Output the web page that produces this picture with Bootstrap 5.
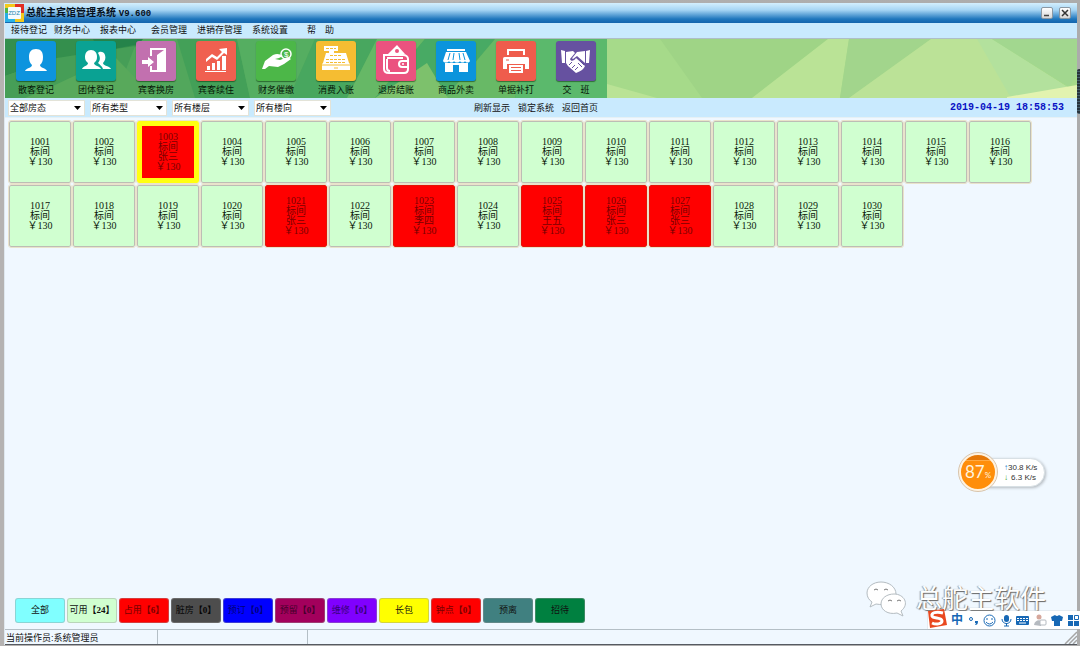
<!DOCTYPE html>
<html lang="zh-CN">
<head>
<meta charset="utf-8">
<meta name="viewport" content="width=device-width, initial-scale=1">
<title>总舵主宾馆管理系统 V9.600</title>
<link href="https://cdn.jsdelivr.net/npm/bootstrap@5.3.0/dist/css/bootstrap.min.css" rel="stylesheet">
<style>
  body { font-family: "Liberation Sans", "Noto Sans CJK SC", sans-serif; font-size: 9px; line-height: 12px; color: #111; background: #b0b0b0; }
  a { color: inherit; text-decoration: none; }
  button { font: inherit; color: inherit; }
  .frame { padding: 3px 3px 1px 4px; background: linear-gradient(90deg, #b5b3b2, #acacac); }
  .window { background: #f0f8ff; border-left: 1px solid #dfe8ee; }
  .titlebar { height: 20px; background: linear-gradient(#d3effe 0, #a6d5f4 35%, #1f76bd 80%, #1465ad); }
  .titlebar h1 { font-size: 10px; line-height: 20px; font-weight: 700; color: #06101c; padding-left: 2px; }
  .titlebar h1 span { font-family: "Liberation Mono", monospace; font-size: 9px; }
  .winbtn { width: 12px; height: 12px; padding: 0; border: 1px solid #8b98a3; border-radius: 2px; background: linear-gradient(#fff, #d6d6d6); }
  .winbtn svg { display: block; }
  .winbtn-min { margin-right: 6px; }
  .menubar { height: 16px; background: #c9eafe; border-bottom: 1px solid #aebfc6; padding-left: 6px; line-height: 15px; gap: 10px; }
  .menubar .menu-tight { margin-right: -3px; }
  .menubar .menu-loose { margin-right: 5px; }
  .menubar .menu-last { margin-left: 9px; }
  .toolbar-strip { height: 59px; background: #a4d88b; }
  .toolbar-art { width: 602px; height: 59px; }
  .tools { padding-left: 1px; }
  .tool { width: 60px; padding: 2px 0 0; border: 0; background: none; line-height: 18px; color: #061606; }
  .tile { width: 40px; height: 40px; border-radius: 3px; box-shadow: 0 1px 1px rgba(0,40,0,.5); }
  .tile svg { display: block; fill: #fff; }
  .filterbar { height: 20px; background: #c9eafe; border-bottom: 1px solid #e6f1f5; padding: 0 13px 0 3px; }
  .filters { gap: 5px; }
  .filterbar .form-select { width: 77px; height: 16px; min-height: 0; padding: 1px 12px 0 1px; font-size: 9px; line-height: 13px; color: #111; border: 1px solid #e3e3d8; border-radius: 0; background-color: #fff; background-position: right 3px center; background-size: 7px 4px;
    background-image: url("data:image/svg+xml,%3csvg xmlns='http://www.w3.org/2000/svg' viewBox='0 0 7 4'%3e%3cpath d='M0 0h7L3.5 4z'/%3e%3c/svg%3e"); }
  .quick { margin-left: 143px; gap: 8px; }
  .clock { font: 700 10px/18px "Liberation Mono", monospace; color: #0a12c4; }
  .rooms { gap: 2px; padding: 3px 4px; }
  .room { width: 62px; height: 62px; padding: 0; border: 1px solid #bdbdb5; border-radius: 2px; outline: 1px solid #e9e3cb; background: #d0ffd0; font-family: "Liberation Serif", "Noto Sans CJK SC", serif; font-size: 10px; line-height: 10px; color: #0b1a0b; }
  .room.busy { background: #f00; border-color: #e31408; color: #780000; }
  .room.picked { border: 4px solid #ff1; box-shadow: inset 0 0 0 1px #ff1; background-clip: padding-box; }
  .legend-row { gap: 2px; padding: 0 10px 6px; }
  .state { width: 50px; height: 25px; padding: 0; border: 1px solid rgba(150,150,150,.4); border-radius: 3px; white-space: nowrap; line-height: 23px; overflow: hidden; }
  .state b { font-family: "Liberation Serif", "Noto Sans CJK SC", serif; }
  .statusbar { height: 16px; border-top: 1px solid #b4bfc6; border-bottom: 1px solid #565a61; line-height: 16px; }
  .statusbar > div { border-right: 1px solid #b4bfc6; padding-left: 1px; }
  .pane-a { width: 153px; } .pane-b { width: 150px; }
  .speed { right: 35px; bottom: 155px; }
  .gauge { width: 38px; height: 38px; border-radius: 50%; border: 2px solid #fff2df; outline: 1px solid #d9c4aa; background: linear-gradient(#e57808 0 5px, #ffab45 5px 6px, #ff8e0a 6px); color: #fff3dc; font: 17px/34px Lato, sans-serif; z-index: 1; }
  .gauge small { font-size: 8px; }
  .rates { margin-left: -12px; width: 60px; height: 29px; padding: 4px 8px 0 18px; border: 1px solid #d8e0e5; border-radius: 0 15px 15px 0; background: #fff; box-shadow: 1px 1px 3px rgba(0,0,0,.25); font-size: 8px; line-height: 10px; color: #333; white-space: nowrap; }
  .brand { right: 34px; bottom: 29px; gap: 8px; font-size: 26px; line-height: 36px; color: #fdfefe; text-shadow: 1px 1px 1px #666, -1px 0 1px #999fa3; }
  .ime { right: 0; bottom: 17px; height: 18px; width: 152px; background: #fff; box-shadow: 0 0 1px #aaa; padding: 0 1px 0 23px; }
  .ime button { border: 0; background: none; padding: 0; color: #1768b5; font-size: 12px; line-height: 16px; font-weight: 700; }
  .ime svg, .brand svg { display: block; }
  .sogou { left: -2px; top: -3px; }
  .edge { right: 0; top: 69px; width: 3px; height: 45px; border-radius: 2px 0 0 2px; background: repeating-linear-gradient(#28333b 0 2px, #46606d 2px 3px); }
</style>
</head>
<body>
<div class="frame min-vh-100 d-flex flex-column position-relative">
<div class="window flex-grow-1 d-flex flex-column position-relative">

  <header class="titlebar d-flex align-items-center">
    <svg width="19" height="20" viewBox="0 0 19 20" class="flex-shrink-0"><path fill="#28aee5" d="M0 7h5v12H0z"/><path fill="#f3c91d" d="M0 1h10v4H4v4H0z"/><path fill="#e12e25" d="M10 1h9v9h-4V5h-5z"/><path fill="#4fb64b" d="M0 5h4v5H0z"/><path fill="#f3c91d" d="M15 10h4v9H9v-4h6z"/><path fill="#29b3e6" d="M3 15h7v4H3z"/><rect x="3" y="4" width="13" height="12" rx="1" fill="#f5fbff"/><text x="9" y="12" font-size="6" text-anchor="middle" fill="#2487ae" font-family="Liberation Sans">ZDZ</text></svg>
    <h1 class="m-0 flex-grow-1">总舵主宾馆管理系统 <span>V9.600</span></h1>
    <button class="winbtn winbtn-min" aria-label="最小化"><svg width="10" height="10"><path d="M2 7.500h5" stroke="#444" stroke-width="1.500"/></svg></button>
    <button class="winbtn winbtn-min" aria-label="关闭"><svg width="10" height="10"><path d="M2 2l6 6M8 2l-6 6" stroke="#333" stroke-width="1.500"/></svg></button>
  </header>

  <nav class="menubar d-flex">
    <a href="#" class="menu-tight">接待登记</a><a href="#">财务中心</a><a href="#" class="menu-loose">报表中心</a><a href="#">会员管理</a><a href="#">进销存管理</a><a href="#">系统设置</a><a href="#" class="menu-last">帮&emsp;助</a>
  </nav>

  <div class="toolbar-strip position-relative overflow-hidden">
    <div class="d-flex h-100 position-absolute w-100">
      <svg class="toolbar-art flex-shrink-0" viewBox="0 0 602 59" preserveAspectRatio="none">
        <rect width="602" height="59" fill="#52a75c"/>
        <path fill="#348f4d" d="M0 0h135l-5 8L50 20 0 37z"/><path fill="#25834a" d="M88 0h50l-4 5-40 8z"/><path fill="#469e57" d="M0 37l52-18L130 7l-20 52H0z"/><path fill="#58a95b" d="M50 46l60-28 40 41H20z"/><path fill="#43a058" d="M172 0h60l13 59h-55z"/><path fill="#55ae61" d="M232 0h78l-26 59h-39z"/><path fill="#48a75f" d="M310 0h62l-30 59h-58z"/><path fill="#66b866" d="M372 0h48l-50 59h-28z"/><path fill="#48aa64" d="M420 0h70l-50 59h-70z"/><path fill="#68b966" d="M490 0h36l-16 59h-70z"/><path fill="#5bb96c" d="M526 0h76v59h-92z"/><path fill="#7dc16c" d="M370 59l52-35 21 35z"/>
      </svg>
      <svg class="flex-grow-1 h-100" style="min-width:0" viewBox="0 0 470 59" preserveAspectRatio="none">
        <rect width="470" height="59" fill="#a6da8a"/><path fill="#9fd486" d="M53 0h168l-76 59H95z"/><path fill="#bae396" d="M0 45l50 14H0zM221 0h21l-9 59h-88z"/><path fill="#a2d58c" d="M242 0h82l-82 59h-9z"/><path fill="#bbe297" d="M324 0h60l78 49-50 8-12 2H242z"/><path fill="#b3e19d" d="M370 0h15l77 49-58 10z"/><path fill="#a2d78f" d="M385 0h85v35l-8 13z"/><path fill="#e2f3b0" d="M400 58l70-12v13h-70z"/>
      </svg>
    </div>
    <div class="tools d-flex position-relative">
      <button class="tool"><span class="tile d-block mx-auto" style="background:#0d94de"><svg viewBox="0 0 40 40"><path d="M20 8c5 0 7 3 7 8 0 4-1 6-3 8 0 3 6 3 7 6H9c1-3 7-3 7-6-2-2-3-4-3-8 0-5 2-8 7-8z"/></svg></span>散客登记</button>
      <button class="tool"><span class="tile d-block mx-auto" style="background:#0aa293"><svg viewBox="0 0 40 40"><path d="M15 9c4 0 6 3 6 7 0 3-1 4-3 6 0 3 6 3 7 6H6c1-3 6-3 6-6-2-2-3-3-3-6 0-4 2-7 6-7z"/><path d="M22 12c1-2 6-2 7 2 1 3 0 6-2 8 0 3 7 3 8 6h-8c-1-3-3-4-5-6 3-3 2-7 0-10z"/></svg></span>团体登记</button>
      <button class="tool"><span class="tile d-block mx-auto" style="background:#c270af"><svg viewBox="0 0 40 40"><path d="M14 7h16v24H14v-6h2v4h5V14l7-5H16v6h-2zM6 19h6v-3l6 5-6 5v-3H6z"/></svg></span>宾客换房</button>
      <button class="tool"><span class="tile d-block mx-auto" style="background:#f06050"><svg viewBox="0 0 40 40"><path d="M9 30h21v1H9zM11 25h3v4h-3zM16 22h3v7h-3zM21 20h3v9h-3zM26 15h4v14h-4zM10 18l6-5 5 3 5-5-3-3 8-1v7l-3-2-7 7-5-3-6 5z"/></svg></span>宾客续住</button>
      <button class="tool"><span class="tile d-block mx-auto" style="background:#4cb748"><svg viewBox="0 0 40 40"><path d="M6 28l3-8 8-6c4-2 7-1 10 1l-4 2-4 1 5 1 8-3 3 2-7 5-6 3-9-1-4 3z"/><circle cx="30" cy="13" r="5" fill="none" stroke="#fff" stroke-width="1.500"/><text x="28" y="16" font-size="8" font-family="Liberation Sans">$</text></svg></span>财务催缴</button>
      <button class="tool"><span class="tile d-block mx-auto" style="background:#f5bd32"><svg viewBox="0 0 40 40"><path d="M8 5h14v5h-4v2h12l3 10 1 1v6H6v-6l1-1 3-10h3v-2H8z"/><path stroke="#f5bd32" stroke-width="1" d="M10 7.500h10M14 14.500h12M10 18.500h20M10 21.500h20" stroke-dasharray="3 1"/><path stroke="#f5bd32" d="M6 24h28M18 27h4"/></svg></span>消费入账</button>
      <button class="tool"><span class="tile d-block mx-auto" style="background:#eb527f"><svg viewBox="0 0 40 40"><path d="M12 13l9-9 8 9z"/><circle cx="21" cy="10" r="2" fill="#eb527f"/><path fill="none" stroke="#fff" stroke-width="2" d="M9 14h18c3 0 5 2 5 4v10c0 2-1 4-4 4H13c-3 0-5-1-5-4V14zM32 20h-6c-4 0-4 6 0 6h6M11 17h16M11 18v9c0 2 1 3 3 3"/><circle cx="27" cy="23" r="1"/></svg></span>退房结账</button>
      <button class="tool"><span class="tile d-block mx-auto" style="background:#0b94dc"><svg viewBox="0 0 40 40"><path d="M11 8h18v2H11zM10 11h20l4 9c-1 2-4 2-5 0-1 2-4 2-5 0-1 2-5 2-6 0-1 2-4 2-5 0-1 2-5 2-6 0zM9 22h23v9h-9v-7h-6v7H9z"/><path stroke="#0b94dc" d="M14 12l-2 7M18 12l-1 7M23 12l1 7M27 12l2 7"/></svg></span>商品外卖</button>
      <button class="tool"><span class="tile d-block mx-auto" style="background:#ef5c4c"><svg viewBox="0 0 40 40"><path fill="none" stroke="#fff" stroke-width="2" d="M12 14V9h16v5"/><path d="M9 16h22c2 0 2 1 2 3v9h-4v-5H11v5H7v-9c0-2 0-3 2-3zM13 24h14v8H13z"/><path stroke="#ef5c4c" d="M15 26.500h10M15 29.500h10M10 19h3"/></svg></span>单据补打</button>
      <button class="tool"><span class="tile d-block mx-auto" style="background:#6651a0"><svg viewBox="0 0 40 40"><path d="M5 9l4 1v12H6zM34 9l-4 1v12h3zM10 11l7-1 2 2-5 6c1 3 4 2 6-1l9 8c-1 3-4 5-9 7l-8-7-2-3zM21 11l8-1v12l-8-7-4 3c-1 0-1-1 0-2z"/><path stroke="#6651a0" d="M13 24l3-3M16 27l3-3M19 29l3-3M24 20l4 4M22 22l4 4"/></svg></span>交&emsp;班</button>
    </div>
  </div>

  <div class="filterbar d-flex align-items-center">
    <div class="filters d-flex">
      <select class="form-select" aria-label="房态"><option>全部房态</option></select>
      <select class="form-select" aria-label="类型"><option>所有类型</option></select>
      <select class="form-select" aria-label="楼层"><option>所有楼层</option></select>
      <select class="form-select" aria-label="楼向"><option>所有楼向</option></select>
    </div>
    <div class="quick d-flex flex-grow-1"><a href="#">刷新显示</a><a href="#">锁定系统</a><a href="#">返回首页</a></div>
    <time class="clock">2019-04-19 18:58:53</time>
  </div>

  <main class="flex-grow-1"><div class="rooms d-flex flex-wrap" id="rooms"></div></main>

  <div class="legend-row d-flex flex-wrap">
    <button class="state" style="background:#80ffff">全部</button>
    <button class="state" style="background:#d0ffd0">可用<b>【24】</b></button>
    <button class="state" style="background:#f00;color:#780000">占用<b>【6】</b></button>
    <button class="state" style="background:#4d4d4d;color:#050505">脏房<b>【0】</b></button>
    <button class="state" style="background:#00f;color:#000078">预订<b>【0】</b></button>
    <button class="state" style="background:#a3005c;color:#45002b">预留<b>【0】</b></button>
    <button class="state" style="background:#8000ff;color:#370078">维修<b>【0】</b></button>
    <button class="state" style="background:#ff0">长包</button>
    <button class="state" style="background:#f00;color:#780000">钟点<b>【0】</b></button>
    <button class="state" style="background:#408080">预离</button>
    <button class="state" style="background:#008040">招待</button>
  </div>

  <footer class="statusbar d-flex"><div class="pane-a">当前操作员:系统管理员</div><div class="pane-b"></div>
    <svg class="ms-auto" width="14" height="14"><path d="M2 14L14 2M6 14l8-8M10 14l4-4" stroke="#a5a5a5" stroke-width="1.500"/></svg>
  </footer>
</div>

<div class="speed position-absolute d-flex align-items-center">
  <div class="gauge text-center position-relative">87<small>%</small></div>
  <div class="rates"><div class="d-flex justify-content-between"><span style="color:#1879c8">↑</span>30.8 K/s</div><div class="d-flex justify-content-between"><span style="color:#37a526">↓</span>6.3 K/s</div></div>
</div>

<div class="brand position-absolute d-flex align-items-center">
  <svg width="42" height="36" viewBox="0 0 42 36" fill="#fff" stroke="#b4bcc1"><path d="M15 1C7 1 1 6 1 12c0 4 2 7 5 9l-2 5 6-3c10 2 20-2 20-10C30 6 23 1 15 1z"/><path d="M28 13c-7 0-13 4-13 10s7 11 16 9l6 3-2-5c9-7 3-17-7-17z"/><path fill="none" stroke="#777" d="M8 9q2-2 4 0M18 9q2-2 4 0M22 20q2-2 4 0M31 20q2-2 4 0"/></svg>
  <span>总舵主软件</span>
</div>

<div class="ime position-absolute d-flex align-items-center justify-content-between">
  <svg class="sogou position-absolute" width="22" height="21" viewBox="0 0 22 21"><path fill="#e9481f" d="M2 3l16-2 3 16-17 3z"/><path d="M17 5C10 3 5 5 6 8c1 3 10 1 10 5 0 3-6 4-10 2" fill="none" stroke="#fff" stroke-width="3"/></svg>
  <button>中</button>
  <button aria-label="标点"><svg width="11" height="12" fill="#1768b5"><circle cx="3" cy="5" r="1.500" fill="none" stroke="#1768b5"/><path d="M7 7h3c0 3-1 4-3 4l1-2H7z"/></svg></button>
  <button aria-label="表情"><svg width="13" height="13" fill="none" stroke="#1768b5"><circle cx="6.500" cy="6.500" r="5.500"/><path d="M4 4v2M9 4v2M3 8q3.500 4 7 0"/></svg></button>
  <button aria-label="语音"><svg width="11" height="13" fill="#1768b5"><rect x="3" y="1" width="5" height="7" rx="2.500"/><path fill="none" stroke="#1768b5" d="M1 5c0 6 9 6 9 0M5.500 9v3M3 12h5"/></svg></button>
  <button aria-label="键盘"><svg width="13" height="11"><rect y="1" width="13" height="9" rx="1" fill="#1768b5"/><path stroke="#fff" stroke-dasharray="2 1" d="M1 3.500h11M1 5.500h11"/><path stroke="#fff" d="M3 8h7"/></svg></button>
  <button aria-label="用户"><svg width="13" height="12" fill="#b5bac0"><circle cx="5" cy="3" r="2.500" fill="#d6a79b"/><path d="M0 11c1-6 8-6 9-1H7v2z"/><rect x="6" y="6" width="6" height="5" rx="1" fill="#fff" stroke="#b5bac0"/></svg></button>
  <button aria-label="皮肤"><svg width="12" height="12" fill="#1768b5"><path d="M4 1q2 2 4 0l4 2-1 4H9v5H3V7H1L0 3z"/></svg></button>
  <button aria-label="工具箱"><svg width="11" height="11" fill="#1768b5"><path d="M0 0h5v5H0zM0 6h5v5H0zM6 6h5v5H6z"/><path fill="none" stroke="#1768b5" d="M6.500.5h4v4h-4z"/></svg></button>
</div>
<div class="edge position-absolute"></div>
</div>

<script src="https://cdn.jsdelivr.net/npm/bootstrap@5.3.0/dist/js/bootstrap.bundle.min.js"></script>
<script>
  const guests = { 1003: '张三', 1021: '张三', 1023: '李四', 1025: '王五', 1026: '张三', 1027: '张三' };
  const rooms = document.getElementById('rooms');
  for (let no = 1001; no <= 1030; no++) {
    const room = document.createElement('button');
    room.className = 'room' + (guests[no] ? ' busy' : '') + (no === 1003 ? ' picked' : '');
    room.innerHTML = [no, '标间', guests[no], '￥130'].filter(Boolean).join('<br>');
    rooms.append(room);
  }
</script>
</body>
</html>
